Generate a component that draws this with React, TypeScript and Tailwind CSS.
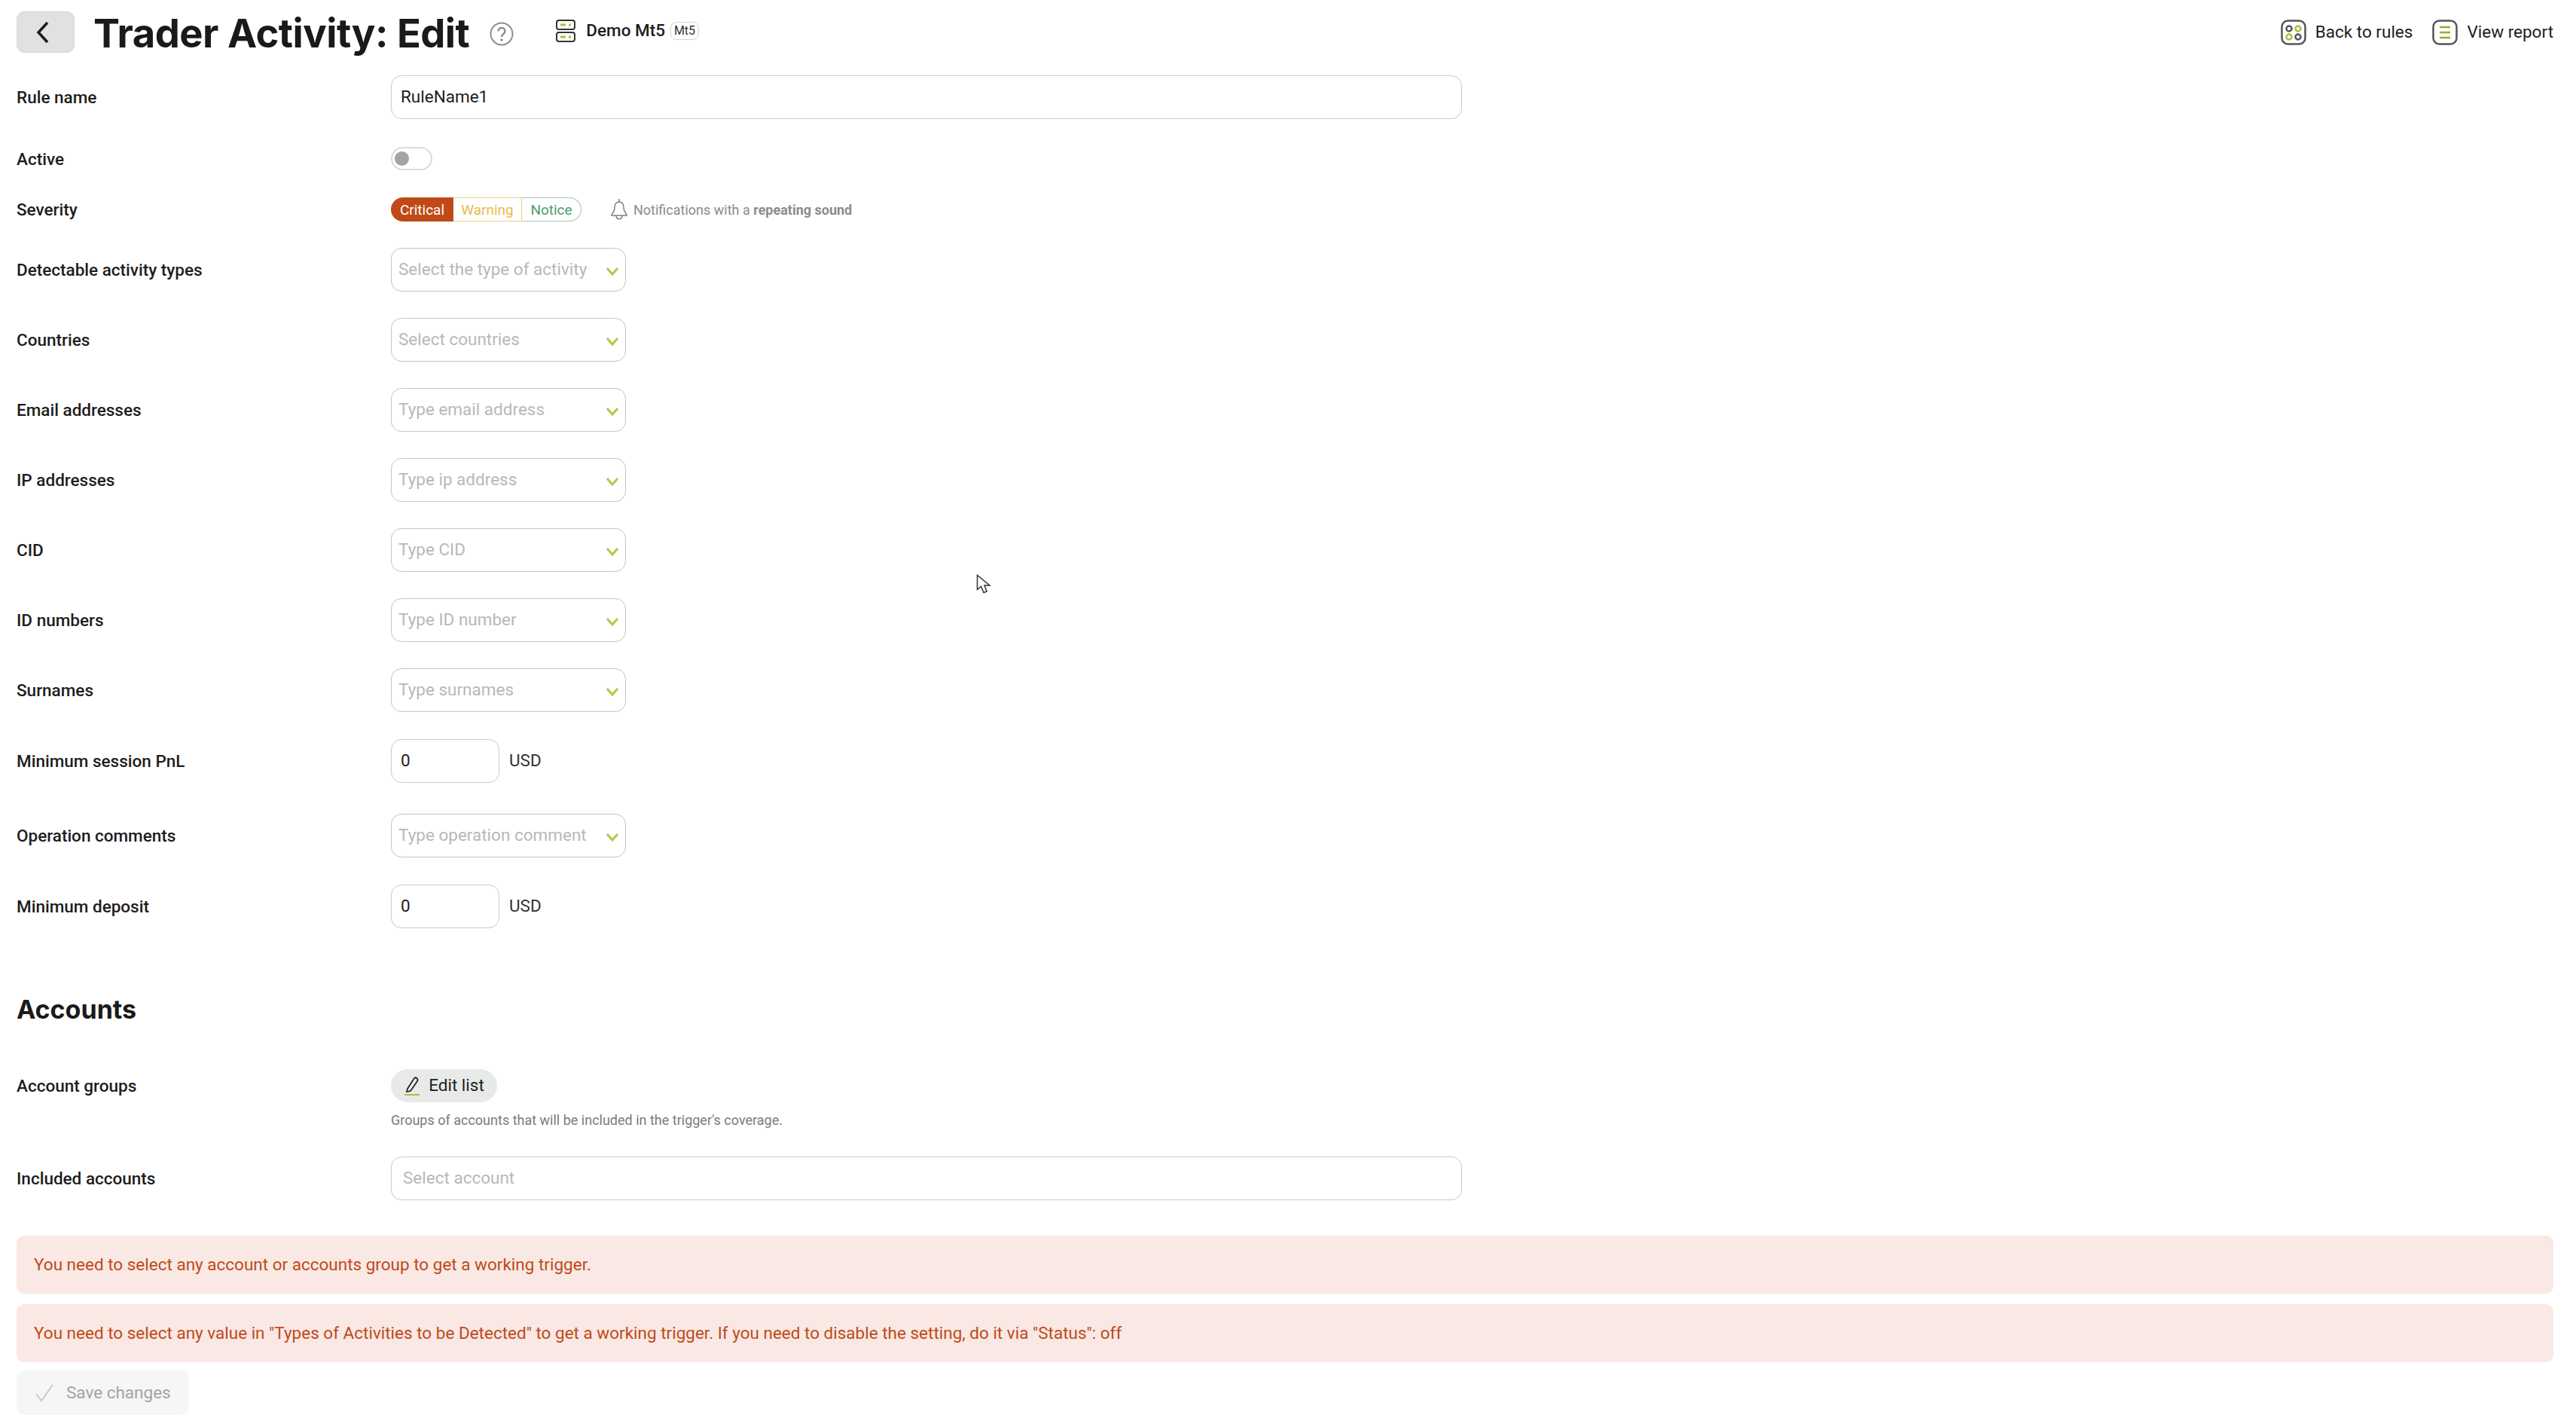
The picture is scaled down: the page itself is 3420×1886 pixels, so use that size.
import type { ReactNode } from 'react';

function Chevron() {
  return (
    <svg width="18" height="12" viewBox="0 0 18 12" fill="none" className="mt-[3px] shrink-0">
      <path d="M2 2l7 8 7-8" stroke="#aecb45" strokeWidth="3" />
    </svg>
  );
}

function Row({ label, className = '', children }: { label: string; className?: string; children: ReactNode }) {
  return (
    <div className={`flex items-center ${className}`}>
      <div className="w-[497px] shrink-0 text-[22.5px] font-medium leading-[30px] text-[#1d1d1d]">{label}</div>
      {children}
    </div>
  );
}

function SelectBox({ placeholder }: { placeholder: string }) {
  return (
    <div className="flex h-[58px] w-[312px] items-center justify-between rounded-[14px] border border-[#c4c4c4] bg-white pl-[9px] pr-[8px]">
      <span className="whitespace-nowrap text-[22.5px] text-[#b8b8b8]">{placeholder}</span>
      <Chevron />
    </div>
  );
}

function NumberBox() {
  return (
    <div className="flex items-center">
      <div className="flex h-[58px] w-[144px] items-center rounded-[14px] border border-[#c9c9c9] pl-[12px] text-[22.5px] text-[#1d1d1d]">0</div>
      <span className="ml-[13px] text-[22.5px] text-[#333333]">USD</span>
    </div>
  );
}

function Alert({ children }: { children: ReactNode }) {
  return (
    <div className="flex h-[77px] items-center rounded-[10px] bg-[#f9e8e4] pl-[23px] text-[22.5px] text-[#bf4a18]">{children}</div>
  );
}

export default function App() {
  const selectRows = [
    { label: 'Detectable activity types', placeholder: 'Select the type of activity' },
    { label: 'Countries', placeholder: 'Select countries' },
    { label: 'Email addresses', placeholder: 'Type email address' },
    { label: 'IP addresses', placeholder: 'Type ip address' },
    { label: 'CID', placeholder: 'Type CID' },
    { label: 'ID numbers', placeholder: 'Type ID number' },
    { label: 'Surnames', placeholder: 'Type surnames' },
  ];

  return (
    <div className="relative h-[1886px] w-[3420px] overflow-hidden bg-white pl-[22px] pr-[30px] font-['Roboto',sans-serif] text-[#1d1d1d]">
      {/* Header */}
      <div className="flex h-[100px] items-start pt-[15px]">
        <button className="flex h-[55px] w-[77px] items-center justify-center rounded-[10px] border border-[#d8dadb] bg-[#dfe1e2] pr-[8px]">
          <svg width="20" height="32" viewBox="0 0 20 32" fill="none">
            <path d="M16 3L4 16l12 13" stroke="#1d1d1d" strokeWidth="3.5" />
          </svg>
        </button>
        <h1 className="ml-[25px] whitespace-nowrap font-['Inter',sans-serif] text-[52.500px] font-bold leading-[58px] tracking-[-0.5px] text-[#1a1a1a]">
          Trader Activity: Edit
        </h1>
        <svg width="32" height="32" viewBox="0 0 32 32" fill="none" className="ml-[27px] mt-[14px]">
          <circle cx="16" cy="16" r="14.5" stroke="#8e8e8e" strokeWidth="2" />
          <path d="M11.5 12.5c0-6 9-6 9 0 0 3.5-4.500 3.500-4.500 7.500" stroke="#8e8e8e" strokeWidth="2.500" />
          <circle cx="16" cy="24" r="1.700" fill="#8e8e8e" />
        </svg>
        <div className="ml-[56px] mt-[9px] flex items-center">
          <svg width="26" height="30" viewBox="0 0 26 30" fill="none">
            <rect x="1" y="1" width="24" height="12" rx="3" stroke="#333333" strokeWidth="2" />
            <rect x="1" y="17" width="24" height="12" rx="3" stroke="#333333" strokeWidth="2" />
            <path d="M6 7h7M17 7h3M6 23h7M17 23h3" stroke="#a5c23c" strokeWidth="3" />
          </svg>
          <span className="ml-[14px] text-[22.5px] font-medium text-[#1d1d1d]">Demo Mt5</span>
          <span className="ml-[7px] flex h-[24px] w-[38px] items-center justify-center rounded-[8px] border border-[#d4d4d4] text-[16px] text-[#333333]">Mt5</span>
        </div>
        <div className="ml-auto mt-[11px] flex items-center">
          <svg width="34" height="34" viewBox="0 0 34 34" fill="none">
            <rect x="1.500" y="1.500" width="31" height="31" rx="8" stroke="#555555" strokeWidth="2.500" />
            <circle cx="11" cy="12" r="3.500" stroke="#555555" strokeWidth="2.500" />
            <circle cx="23" cy="12" r="3.500" stroke="#a5c23c" strokeWidth="2.500" />
            <circle cx="11" cy="23" r="3.500" stroke="#a5c23c" strokeWidth="2.500" />
            <circle cx="23" cy="23" r="3.500" stroke="#555555" strokeWidth="2.500" />
          </svg>
          <span className="ml-[12px] text-[22.5px] text-[#1d1d1d]">Back to rules</span>
          <svg width="34" height="34" viewBox="0 0 34 34" fill="none" className="ml-[26px]">
            <rect x="1.500" y="1.500" width="31" height="31" rx="8" stroke="#555555" strokeWidth="2.500" />
            <path d="M10 10h14M10 17h14M10 24h14" stroke="#94ad2f" strokeWidth="2.500" />
          </svg>
          <span className="ml-[12px] text-[22.5px] text-[#1d1d1d]">View report</span>
        </div>
      </div>

      {/* Rule settings */}
      <Row label="Rule name">
        <div className="flex h-[58px] w-[1422px] items-center rounded-[14px] border border-[#c9c9c9] pl-[12px] text-[22.5px] text-[#1d1d1d]">RuleName1</div>
      </Row>
      <Row label="Active" className="mt-[37px]">
        <div className="flex h-[31px] w-[55px] items-center rounded-full border-2 border-[#dcdcdc] pl-[3px]">
          <div className="h-[19px] w-[19px] rounded-full bg-[#a3a3a3]" />
        </div>
      </Row>
      <Row label="Severity" className="mt-[36px]">
        <div className="flex h-[32px] text-[19px] leading-none">
          <div className="flex w-[83px] items-center justify-center rounded-l-full bg-[#c04a17] text-white">Critical</div>
          <div className="flex w-[91px] items-center justify-center border-y border-r border-[#e9cf80] text-[#ebb94c]">Warning</div>
          <div className="flex w-[79px] items-center justify-center rounded-r-full border-y border-r border-[#9cc7ae] text-[#4c9c6c]">Notice</div>
        </div>
        <svg width="22" height="30" viewBox="0 0 22 30" fill="none" className="ml-[39px]">
          <path d="M11 1v4M11 5c-4.500 0-6 4-6 8 0 5-3 7-4 9v1h20v-1c-1-2-4-4-4-9 0-4-1.500-8-6-8zM7 23c0 6 8 6 8 0" stroke="#808080" strokeWidth="1.500" />
        </svg>
        <span className="ml-[8px] whitespace-nowrap text-[18px] text-[#8b8b8b]">
          Notifications with a <span className="font-bold">repeating sound</span>
        </span>
      </Row>

      {selectRows.map((row) => (
        <Row key={row.label} label={row.label} className="mt-[35px]">
          <SelectBox placeholder={row.placeholder} />
        </Row>
      ))}

      <Row label="Minimum session PnL" className="mt-[36px]">
        <NumberBox />
      </Row>
      <Row label="Operation comments" className="mt-[41px]">
        <SelectBox placeholder="Type operation comment" />
      </Row>
      <Row label="Minimum deposit" className="mt-[36px]">
        <NumberBox />
      </Row>

      {/* Accounts */}
      <h2 className="mt-[86px] font-['Inter',sans-serif] text-[34px] font-bold leading-[44px] text-[#1a1a1a]">Accounts</h2>

      <Row label="Account groups" className="mt-[57px]">
        <button className="flex h-[44px] w-[141px] items-center justify-center rounded-full bg-[#e8e9e9] text-[22.5px] text-[#1d1d1d]">
          <svg width="22" height="26" viewBox="0 0 22 26" fill="none" className="mr-[11px]">
            <path d="M5 17L14 3c2-2 6 1 4 4L9 20l-5 1z" stroke="#1d1d1d" strokeWidth="1.700" />
            <path d="M1 25h20" stroke="#a5c23c" strokeWidth="2" />
          </svg>
          Edit list
        </button>
      </Row>
      <div className="ml-[497px] mt-[12px] text-[18px] leading-[24px] text-[#7b7b7b]">
        Groups of accounts that will be included in the trigger's coverage.
      </div>
      <Row label="Included accounts" className="mt-[36px]">
        <div className="flex h-[58px] w-[1422px] items-center rounded-[14px] border border-[#c9c9c9] pl-[15px] text-[22.5px] text-[#b8b8b8]">Select account</div>
      </Row>

      {/* Validation messages */}
      <div className="mt-[47px] flex flex-col gap-[14px]">
        <Alert>You need to select any account or accounts group to get a working trigger.</Alert>
        <Alert>You need to select any value in "Types of Activities to be Detected" to get a working trigger. If you need to disable the setting, do it via "Status": off</Alert>
      </div>
      <button className="mt-[11px] flex h-[59px] w-[229px] items-center rounded-[10px] bg-[#f6f6f6] pl-[24px] text-[22.5px] text-[#a3a3a3]">
        <svg width="28" height="28" viewBox="0 0 28 28" fill="none" className="mr-[14px]">
          <path d="M2 15l7 9L24 3" stroke="#c9c9c9" strokeWidth="2" />
        </svg>
        Save changes
      </button>

      {/* Mouse cursor from the capture */}
      <svg width="22" height="28" viewBox="0 0 22 28" fill="white" className="absolute left-[1296px] top-[762px]">
        <path d="M1.500 1.500v19l5-4 3.500 8 4-1.500-3-8h7z" stroke="#333333" strokeWidth="1.500" />
      </svg>
    </div>
  );
}
